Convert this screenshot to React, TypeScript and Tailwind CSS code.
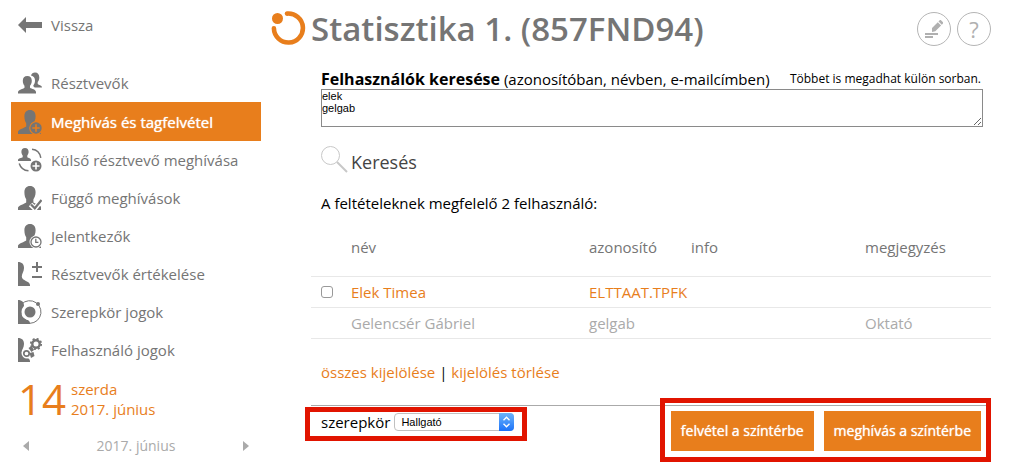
import type { ReactNode } from 'react';

interface MenuItem {
  label: string;
  icon: ReactNode;
  active?: boolean;
}

interface UserRow {
  name: string;
  id: string;
  info: string;
  note: string;
  selectable: boolean;
}

const personPath =
  'M12 0c3.6 0 5.6 2.4 5.6 6.2 0 3.2-1.2 5.6-2.2 7v3.2c2 1.2 7 2.2 7.6 4.6V24H0v-2.4c1-2.6 6.4-3.6 8.2-5.2v-3.2C7.2 11.800 6.400 9.400 6.400 6.200 6.400 2.400 8.400 0 12 0z';

const halfPersonPath = 'M0 0c4 0 6 2.200 6 6 0 3.500-2.200 5.500-2.200 8.500 0 4.500 8.200 4.500 8.200 8.500v1H0z';

function MenuIcon({ children }: { children: ReactNode }) {
  return (
    <svg viewBox="0 0 24 24" className="size-6 shrink-0" fill="#757575" aria-hidden="true">
      {children}
    </svg>
  );
}

const menuItems: MenuItem[] = [
  {
    label: 'Résztvevők',
    icon: (
      <MenuIcon>
        <path d="M13 4.500C13.500 2.600 15 1.500 17 1.500c3 0 4.300 2 4.300 5 0 2-.8 3.500-1.600 4.500v2c.8 1 4.300 1.200 4.300 3.500h-7.200c-1.200-.8-1.500-1.200-1.500-2 1.200-1.500 1.700-3 1.700-5 0-2.500-1.200-4.200-4-5z" />
        <path d="M9.300 5c2.900 0 4.500 1.900 4.500 4.700 0 2.400-1 4-1.800 5v2c1.500 1.200 6 1.700 6 4.300v1.500H0V21c.5-2.400 5-3 6.500-4.300v-2c-.8-1-1.700-2.600-1.700-5C4.800 6.900 6.400 5 9.300 5z" />
      </MenuIcon>
    ),
  },
  {
    label: 'Meghívás és tagfelvétel',
    active: true,
    icon: (
      <MenuIcon>
        <path d={personPath} />
        <circle cx="18" cy="18" r="6.800" fill="#e87e1c" />
        <circle cx="18" cy="18" r="5.700" />
        <path d="M18 14.300v7.400M14.300 18h7.400" stroke="#e87e1c" strokeWidth="1.600" />
      </MenuIcon>
    ),
  },
  {
    label: 'Külső résztvevő meghívása',
    icon: (
      <MenuIcon>
        <path d="M7 0c2.400 0 3.600 1.500 3.600 3.800 0 1.600-.6 2.800-1.300 3.600v1.800c1 .8 3.700 1 3.700 2.800v1H0v-1c0-1.800 3.700-2 4.700-2.800V7.400C4 6.600 3.400 5.400 3.400 3.800 3.400 1.500 4.600 0 7 0z" />
        <path d="M14 1.200c4.500.4 8 3.800 8.800 8.600M1.200 15.500c1.300 4 5 7 9.300 7.300" fill="none" stroke="#757575" strokeWidth="1.500" />
        <circle cx="18" cy="18" r="5.500" />
        <path d="M18 14.500v7M14.500 18h7" stroke="#fff" strokeWidth="1.600" />
      </MenuIcon>
    ),
  },
  {
    label: 'Függő meghívások',
    icon: (
      <MenuIcon>
        <path d={personPath} />
        <path d="m12.500 18.500 4.300 4L24 13.500" fill="none" stroke="#fff" strokeWidth="5" />
        <path d="m13 18.500 3.800 3.800L23.500 14" fill="none" stroke="#757575" strokeWidth="2.200" />
      </MenuIcon>
    ),
  },
  {
    label: 'Jelentkezők',
    icon: (
      <MenuIcon>
        <path d={personPath} />
        <circle cx="18" cy="18" r="6.500" fill="#fff" />
        <circle cx="18" cy="18" r="5" fill="#fff" stroke="#757575" strokeWidth="1.300" />
        <path d="M17.800 14.800v3.500h2.600" fill="none" stroke="#757575" strokeWidth="1.300" />
      </MenuIcon>
    ),
  },
  {
    label: 'Résztvevők értékelése',
    icon: (
      <MenuIcon>
        <path d={halfPersonPath} />
        <path d="M14 5h10M19 0v10M14 15h10" stroke="#757575" strokeWidth="2" />
      </MenuIcon>
    ),
  },
  {
    label: 'Szerepkör jogok',
    icon: (
      <MenuIcon>
        <path d={halfPersonPath} />
        <circle cx="12" cy="12" r="8.500" fill="#fff" />
        <path d="M3.500 4.200A11.300 11.300 0 1 1 8 22.700" fill="none" stroke="#757575" strokeWidth="1" />
        <circle cx="12" cy="12" r="5.500" />
        <circle cx="20" cy="4" r="2" />
      </MenuIcon>
    ),
  },
  {
    label: 'Felhasználó jogok',
    icon: (
      <MenuIcon>
        <path d={halfPersonPath} />
        <circle cx="9" cy="15" r="5.500" fill="#fff" />
        <circle cx="18" cy="6" r="3.700" fill="none" stroke="#757575" strokeWidth="2.400" />
        <circle cx="18" cy="6" r="5.200" fill="none" stroke="#757575" strokeWidth="1.800" strokeDasharray="2.040 2.040" />
        <circle cx="8.500" cy="15.500" r="2.700" fill="none" stroke="#757575" strokeWidth="1.700" />
        <path d="m10.500 10 3-2 2.500 4-2.500 2zM11.500 15l4-1 1 4-3.500 2z" />
      </MenuIcon>
    ),
  },
];

const users: UserRow[] = [
  { name: 'Elek Timea', id: 'ELTTAAT.TPFK', info: '', note: '', selectable: true },
  { name: 'Gelencsér Gábriel', id: 'gelgab', info: '', note: 'Oktató', selectable: false },
];

function Sidebar() {
  return (
    <aside className="w-[250px] shrink-0 pt-[7px] text-[#757575]">
      <a href="#vissza" className="flex h-9 items-center gap-[9px] pl-[7px]">
        <svg viewBox="0 0 24 16" className="h-4 w-6" fill="#757575" aria-hidden="true">
          <path d="M0 8 8 0v5h16v6H8v5z" />
        </svg>
        Vissza
      </a>

      <nav className="mt-[21px]">
        {menuItems.map((item) => (
          <a
            key={item.label}
            href="#menu"
            className={
              item.active
                ? 'flex h-[39px] items-center gap-[9px] bg-[#e87e1c] pl-[7px] text-white [text-shadow:0_0_1px_#fff]'
                : 'flex h-[38px] items-center gap-[9px] pl-[7px]'
            }
          >
            {item.icon}
            {item.label}
          </a>
        ))}
      </nav>

      <div className="mt-[10px] flex items-center gap-2 pl-[7px] text-[#e87e1c]">
        <span className="w-[45px] text-[42px] leading-10">14</span>
        <p className="leading-5">
          szerda
          <br />
          2017. június
        </p>
      </div>

      <div className="mt-[17px] flex h-5 items-center justify-between px-3 text-sm text-[#aaaaaa]">
        <button type="button" aria-label="Előző hónap">
          <svg viewBox="0 0 6 10" className="h-[10px] w-[6px]" fill="#aaaaaa">
            <path d="M6 0v10L0 5z" />
          </svg>
        </button>
        2017. június
        <button type="button" aria-label="Következő hónap">
          <svg viewBox="0 0 6 10" className="h-[10px] w-[6px]" fill="#aaaaaa">
            <path d="M0 0v10l6-5z" />
          </svg>
        </button>
      </div>
    </aside>
  );
}

function PageHeader() {
  return (
    <header className="flex h-[57px] items-center gap-[5px] text-[#757575]">
      <svg viewBox="0 0 35 35" className="size-[35px] shrink-0" aria-hidden="true">
        <circle cx="6.500" cy="7.500" r="5.500" fill="#e87e1c" />
        <path
          d="M16 2.600A14.500 14.500 0 1 1 2.900 17.300"
          fill="none"
          stroke="#e87e1c"
          strokeWidth="4.600"
          strokeLinecap="round"
        />
      </svg>
      <h1 className="grow text-[33px] leading-10 font-semibold">Statisztika 1. (857FND94)</h1>
      <div className="flex gap-[6px]">
        <button
          type="button"
          aria-label="Szerkesztés"
          className="flex size-[34px] items-center justify-center rounded-full border border-[#b5b5b5]"
        >
          <svg viewBox="0 0 18 18" className="size-[18px]" fill="#b0b0b0">
            <path d="M0 13h13v2H0zM0 16h8v2H0zM7 8l5.800-5.800 3.300 3.300-5.800 5.800L7 12zM13.500 1.500 14.700.3c.4-.4.900-.4 1.300 0l2 2c.4.400.4.900 0 1.300l-1.200 1.200z" />
          </svg>
        </button>
        <button
          type="button"
          aria-label="Súgó"
          className="flex size-[34px] items-center justify-center rounded-full border border-[#b5b5b5] text-[22px] leading-6 text-[#b0b0b0]"
        >
          ?
        </button>
      </div>
    </header>
  );
}

function SearchForm() {
  return (
    <div className="pt-3 pr-2 pl-[10px]">
      <div className="flex items-center justify-between leading-5">
        <label htmlFor="query">
          <strong className="text-base leading-5 font-bold">Felhasználók keresése</strong> (azonosítóban,
          névben, e-mailcímben)
        </label>
        <span className="pr-[2px] text-xs leading-5">Többet is megadhat külön sorban.</span>
      </div>
      <textarea
        id="query"
        defaultValue={'elek\ngelgab'}
        className="block h-[38px] w-full border border-[#8a8a8a] bg-white font-['Liberation_Sans',sans-serif] text-[11px] leading-3"
      />
      <button type="button" className="mt-[19px] flex items-center gap-[3px] text-lg leading-8 text-[#444444]">
        <svg viewBox="0 0 27 27" className="size-[27px] self-start" fill="none" stroke="#c8c8c8" aria-hidden="true">
          <circle cx="9.500" cy="9.500" r="9" />
          <path d="m16 16 10 10" strokeWidth="2" />
        </svg>
        Keresés
      </button>
      <p className="mt-[14px]">A feltételeknek megfelelő 2 felhasználó:</p>
    </div>
  );
}

function UserTable() {
  return (
    <table className="mt-1 w-full table-fixed text-left">
      <thead>
        <tr className="h-[58px] border-b border-[#e8e8e8] text-[#757575]">
          <th className="w-10"></th>
          <th className="w-[35%] font-normal">név</th>
          <th className="w-[15%] font-normal">azonosító</th>
          <th className="font-normal">info</th>
          <th className="w-[126px] font-normal">megjegyzés</th>
        </tr>
      </thead>
      <tbody>
        {users.map((user) => (
          <tr
            key={user.id}
            className={
              user.selectable
                ? 'h-[31px] border-b border-[#e8e8e8] text-[#e87e1c]'
                : 'h-[31px] border-b border-[#e8e8e8] text-[#aaaaaa]'
            }
          >
            <td className="pl-[10px]">
              {user.selectable && (
                <input
                  type="checkbox"
                  aria-label={user.name}
                  className="block size-3 appearance-none rounded-[3px] border border-[#999999] bg-white checked:bg-[#e87e1c]"
                />
              )}
            </td>
            <td>{user.selectable ? <a href="#user">{user.name}</a> : user.name}</td>
            <td>{user.selectable ? <a href="#user">{user.id}</a> : user.id}</td>
            <td>{user.info}</td>
            <td>{user.note}</td>
          </tr>
        ))}
      </tbody>
    </table>
  );
}

function ActionBar() {
  return (
    <footer className="mt-[22px] flex items-start justify-between border-t border-[#aaaaaa] px-[10px] pt-[5px]">
      <div className="relative flex items-center gap-1">
        <label htmlFor="role">szerepkör</label>
        <div className="relative">
          <select
            id="role"
            className="block h-[18px] w-[120px] appearance-none rounded border border-[#c0c0c0] bg-white pl-[6px] font-['Liberation_Sans',sans-serif] text-[11px] leading-4"
          >
            <option>Hallgató</option>
          </select>
          <svg
            viewBox="0 0 15 18"
            className="pointer-events-none absolute top-0 right-0 h-[18px] w-[15px] rounded-r bg-linear-to-b from-[#6cb3fa] to-[#1a72f8]"
            fill="none"
            stroke="#fff"
            strokeWidth="1.400"
            aria-hidden="true"
          >
            <path d="m4.500 7.200 3-2.900 3 2.900M4.500 10.800l3 2.900 3-2.900" />
          </svg>
        </div>
        <div className="pointer-events-none absolute -top-1 -right-[13px] -bottom-2 -left-4 border-5 border-[#e11400]" />
      </div>

      <div className="relative flex gap-[10px]">
        <button type="button" className="h-10 bg-[#e87e1c] px-[10px] text-sm text-white [text-shadow:0_0_1px_#fff]">
          felvétel a színtérbe
        </button>
        <button type="button" className="h-10 bg-[#e87e1c] px-[10px] text-sm text-white [text-shadow:0_0_1px_#fff]">
          meghívás a színtérbe
        </button>
        <div className="pointer-events-none absolute -top-[13px] -right-[10px] -bottom-[11px] -left-[11px] border-5 border-[#e11400]" />
      </div>
    </footer>
  );
}

export default function App() {
  return (
    <div className="flex min-h-screen bg-white pr-[25px] pl-[11px] font-['Open_Sans',sans-serif] text-[15px] leading-[22px] text-black">
      <Sidebar />
      <main className="ml-[10px] min-w-0 grow">
        <PageHeader />
        <div className="ml-10">
          <SearchForm />
          <UserTable />
          <p className="mt-[22px] px-[10px]">
            <a href="#select" className="text-[#e87e1c]">
              összes kijelölése
            </a>{' '}
            |{' '}
            <a href="#clear" className="text-[#e87e1c]">
              kijelölés törlése
            </a>
          </p>
          <ActionBar />
        </div>
      </main>
    </div>
  );
}
